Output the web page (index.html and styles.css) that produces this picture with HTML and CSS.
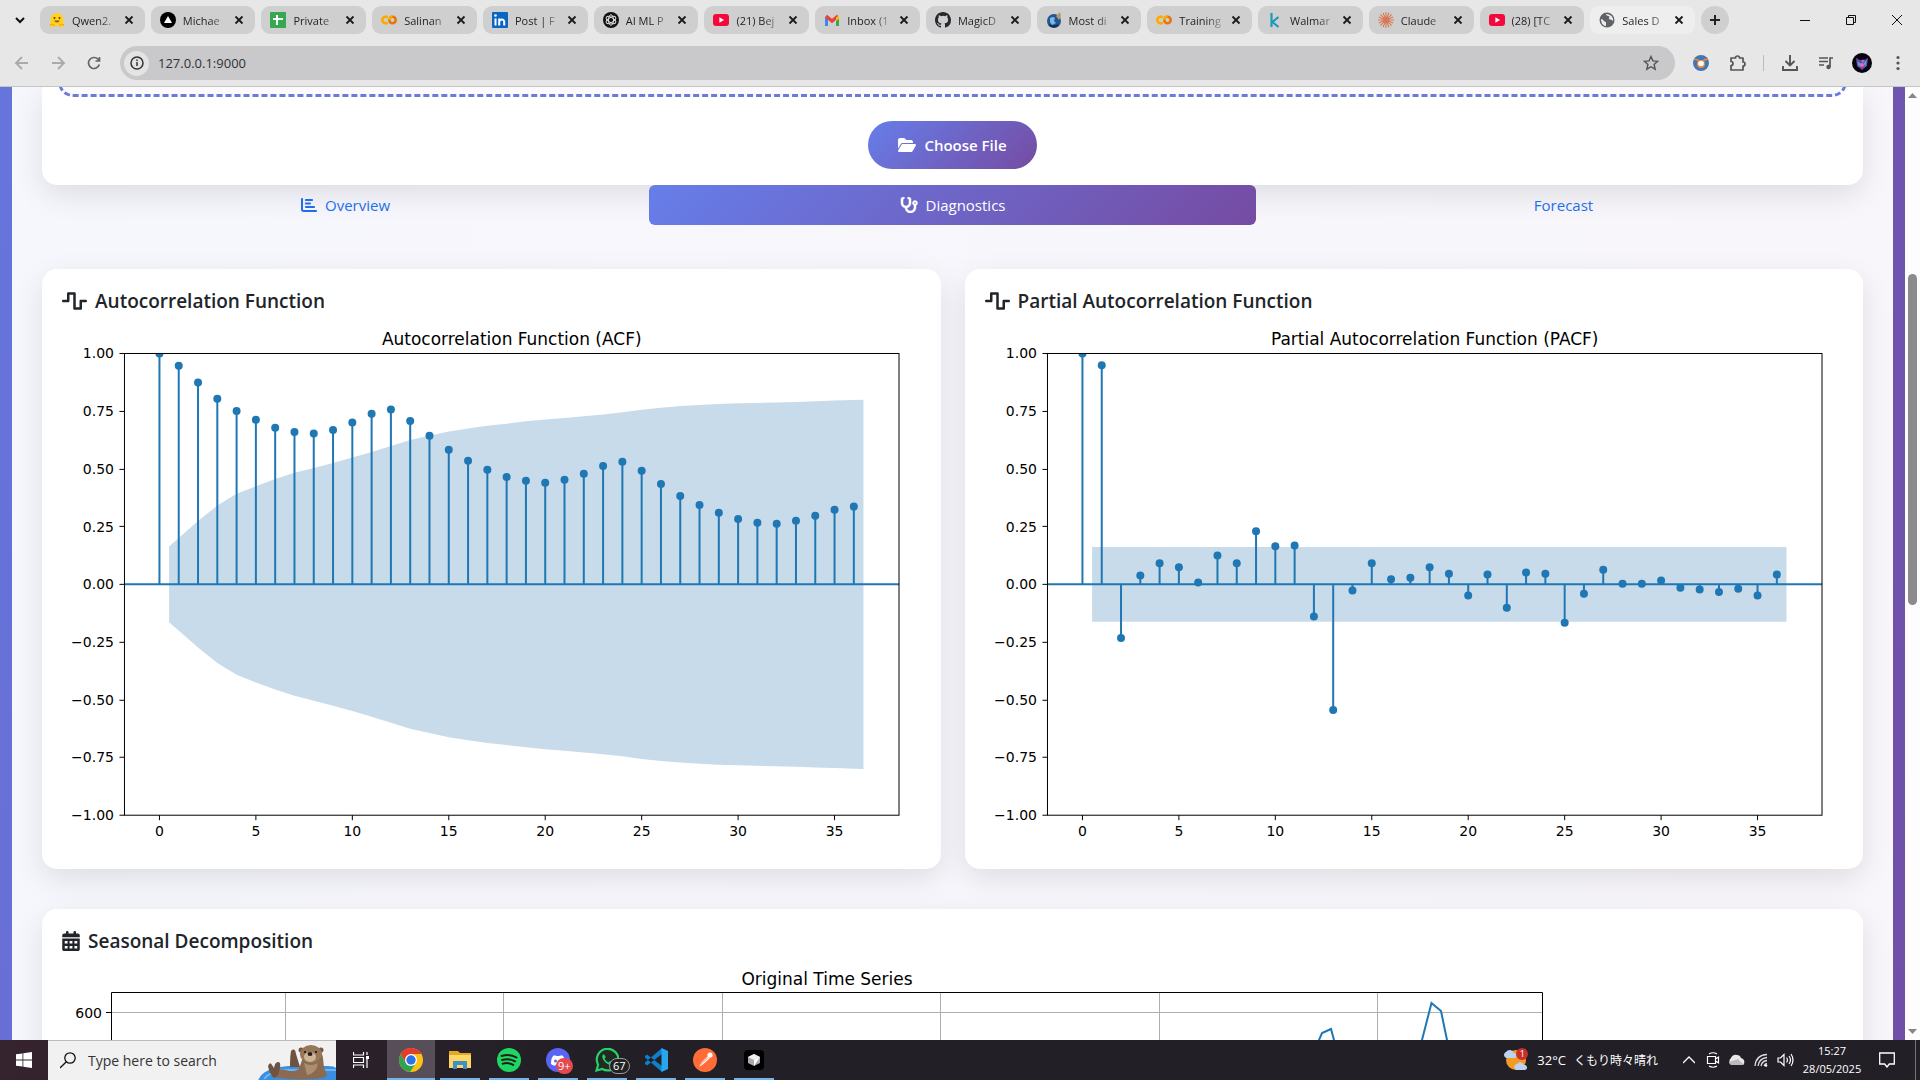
FILE: index.html
```html
<!DOCTYPE html>
<html lang="en">
<head>
<meta charset="utf-8">
<title>Sales Dashboard</title>
<link rel="stylesheet" href="styles.css">
</head>
<body>
<svg class="defs" aria-hidden="true">
  <symbol id="close" viewBox="0 0 10 10"><path d="M1.5 1.5l7 7M8.5 1.5l-7 7" stroke="#1b1b1b" stroke-width="1.8"/></symbol>
  <symbol id="youtube" viewBox="0 0 16 16"><rect y="2" width="16" height="12" rx="3" fill="#f5083c"/><path d="M6.4 5.3v5.4L11 8z" fill="#fff"/></symbol>
  <symbol id="colab" viewBox="0 0 16 16"><g fill="none" stroke-width="2.6"><circle cx="11.5" cy="8" r="3.2" stroke="#e8750a"/><path d="M6.700 5.400a3.300 3.300 0 1 0 0 5.200" stroke="#f9ab00"/><path d="M8.3 8a3.2 3.2 0 0 1 3.2-3.2" stroke="#f9ab00"/></g></symbol>
  <symbol id="wave" viewBox="0 0 640 512"><path d="M128 64c0-17.700 14.300-32 32-32H320c17.700 0 32 14.300 32 32V416h96V256c0-17.700 14.300-32 32-32H608c17.700 0 32 14.300 32 32s-14.300 32-32 32H512V448c0 17.700-14.300 32-32 32H320c-17.700 0-32-14.300-32-32V96H192V256c0 17.700-14.300 32-32 32H32c-17.700 0-32-14.300-32-32s14.300-32 32-32h96V64z" fill="currentColor"/></symbol>
</svg>

<header class="browser">
  <div class="tabstrip">
    <button class="tab-search" aria-label="Search tabs"><svg width="12" height="12" viewBox="0 0 12 12"><path d="M2 4l4 4 4-4" fill="none" stroke="#111" stroke-width="2"/></svg></button>
    <nav class="tabs" aria-label="Open tabs">
      <div class="tab"><svg class="fav" viewBox="0 0 16 16"><path d="M1 14c-1-1 0-3 1-3C0 5 4 1 8 1s8 4 6 10c1 0 2 2 1 3-2 2-4 1-5 0H6c-1 1-3 2-5 0z" fill="#ffd21e"/><circle cx="5.500" cy="6" r="1" fill="#553b16"/><circle cx="10.500" cy="6" r="1" fill="#553b16"/><path d="M5 8.500q3 4 6 0z" fill="#a8451d"/><path d="M1 13q3-2 5 1M15 13q-3-2-5 1" fill="none" stroke="#f59b12"/></svg><a href="#">Qwen2.</a><button aria-label="Close tab"><svg><use href="#close"/></svg></button></div>
      <div class="tab"><svg class="fav" viewBox="0 0 16 16"><circle cx="8" cy="8" r="8" fill="#000"/><path d="M8 4l4 7H4z" fill="#fff"/></svg><a href="#">Michae</a><button aria-label="Close tab"><svg><use href="#close"/></svg></button></div>
      <div class="tab"><svg class="fav" viewBox="0 0 16 16"><rect width="16" height="16" rx="1" fill="#36a852"/><path d="M7 3v10M3 7h10" stroke="#fff" stroke-width="2"/></svg><a href="#">Private</a><button aria-label="Close tab"><svg><use href="#close"/></svg></button></div>
      <div class="tab"><svg class="fav"><use href="#colab"/></svg><a href="#">Salinan</a><button aria-label="Close tab"><svg><use href="#close"/></svg></button></div>
      <div class="tab"><svg class="fav" viewBox="0 0 16 16"><rect width="16" height="16" rx="1" fill="#0a66c2"/><path d="M3.500 6.500v7M7.200 6.500v7M7.200 10c0-3 5-3.600 5 0v3.500" stroke="#fff" stroke-width="2" fill="none"/><circle cx="3.500" cy="3.500" r="1.300" fill="#fff"/></svg><a href="#">Post | F</a><button aria-label="Close tab"><svg><use href="#close"/></svg></button></div>
      <div class="tab"><svg class="fav" viewBox="0 0 16 16"><circle cx="8" cy="8" r="8" fill="#111"/><g fill="none" stroke="#ddd"><ellipse cx="8" cy="8" rx="2.500" ry="5.300"/><ellipse cx="8" cy="8" rx="2.500" ry="5.300" transform="rotate(60 8 8)"/><ellipse cx="8" cy="8" rx="2.500" ry="5.300" transform="rotate(120 8 8)"/></g></svg><a href="#">AI ML P</a><button aria-label="Close tab"><svg><use href="#close"/></svg></button></div>
      <div class="tab"><svg class="fav"><use href="#youtube"/></svg><a href="#">(21) Bej</a><button aria-label="Close tab"><svg><use href="#close"/></svg></button></div>
      <div class="tab"><svg class="fav" viewBox="0 0 16 16"><path d="M2.500 14V5" stroke="#4285f4" stroke-width="3"/><path d="M13.500 14V5" stroke="#34a853" stroke-width="3"/><path d="M2 4l6 5 6-5" fill="none" stroke="#ea4335" stroke-width="3.400"/><path d="M12 5.700L15 3v4l-3 2z" fill="#fbbc04"/></svg><a href="#">Inbox (1</a><button aria-label="Close tab"><svg><use href="#close"/></svg></button></div>
      <div class="tab"><svg class="fav" viewBox="0 0 16 16"><path fill="#24292f" d="M8 0C3.580 0 0 3.580 0 8c0 3.540 2.290 6.530 5.470 7.590.4.070.55-.17.55-.38 0-.19-.01-.82-.01-1.490-2.010.37-2.530-.49-2.690-.94-.09-.23-.48-.94-.82-1.130-.28-.15-.68-.52-.01-.53.63-.01 1.080.58 1.230.82.72 1.210 1.870.87 2.330.66.07-.52.28-.87.51-1.070-1.780-.2-3.640-.89-3.640-3.950 0-.87.31-1.590.82-2.150-.08-.2-.36-1.020.08-2.120 0 0 .67-.21 2.200.82a7.600 7.600 0 0 1 4 0c1.530-1.040 2.200-.82 2.200-.82.44 1.100.16 1.920.08 2.120.51.56.82 1.270.82 2.150 0 3.070-1.870 3.750-3.650 3.950.29.25.54.73.54 1.480 0 1.070-.01 1.930-.01 2.200 0 .21.15.46.55.38A8 8 0 0 0 16 8c0-4.420-3.580-8-8-8z"/></svg><a href="#">MagicD</a><button aria-label="Close tab"><svg><use href="#close"/></svg></button></div>
      <div class="tab"><svg class="fav" viewBox="0 0 16 16"><circle cx="8" cy="9" r="7" fill="#27548e"/><path d="M4 6q3-2 5 0l-1 3 2 2-4 2-2-3z" fill="#74b9e8"/><path d="M10 4l4-4 1 4-2 4z" fill="#b29b72"/><path d="M3 13q5 3 9 0" stroke="#13294a" stroke-width="2" fill="none"/></svg><a href="#">Most di</a><button aria-label="Close tab"><svg><use href="#close"/></svg></button></div>
      <div class="tab"><svg class="fav"><use href="#colab"/></svg><a href="#">Training</a><button aria-label="Close tab"><svg><use href="#close"/></svg></button></div>
      <div class="tab"><svg class="fav" viewBox="0 0 16 16"><path d="M4.500 1v14M11.500 5l-6 5 6 5" fill="none" stroke="#1a9cb8" stroke-width="2.200"/></svg><a href="#">Walmar</a><button aria-label="Close tab"><svg><use href="#close"/></svg></button></div>
      <div class="tab"><svg class="fav" viewBox="0 0 16 16"><path d="M8 0v16M0 8h16M2.300 2.300l11.400 11.400M13.700 2.300L2.300 13.700M5 .8l6 14.400M11 .8L5 15.200M.8 5l14.400 6M15.200 5L.8 11" stroke="#d97757" stroke-width="1.100"/></svg><a href="#">Claude</a><button aria-label="Close tab"><svg><use href="#close"/></svg></button></div>
      <div class="tab"><svg class="fav"><use href="#youtube"/></svg><a href="#">(28) [TC</a><button aria-label="Close tab"><svg><use href="#close"/></svg></button></div>
      <div class="tab active"><svg class="fav" viewBox="0 0 16 16"><circle cx="8" cy="8" r="7.500" fill="#5f6368"/><path d="M2 7c3 0 2 3 5 3v4c-3 0-5-3-5-7zM7 2c0 3 5 1 3 4-1 2 3 1 4 3 1-4-3-7-7-7z" fill="#ececec"/></svg><a href="#">Sales D</a><button aria-label="Close tab"><svg><use href="#close"/></svg></button></div>
    </nav>
    <button class="new-tab" aria-label="New tab"><svg width="12" height="12" viewBox="0 0 12 12"><path d="M6 1v10M1 6h10" stroke="#222" stroke-width="2"/></svg></button>
    <div class="window-controls">
      <button aria-label="Minimize"><svg width="12" height="12" viewBox="0 0 12 12"><path d="M1 6.500h10" stroke="#111"/></svg></button>
      <button aria-label="Restore"><svg width="12" height="12" viewBox="0 0 12 12"><path d="M1.500 3.500h7v7h-7zM3.500 3.500v-2h7v7h-2" fill="none" stroke="#111"/></svg></button>
      <button aria-label="Close"><svg width="12" height="12" viewBox="0 0 12 12"><path d="M1 1l10 10M11 1L1 11" stroke="#111"/></svg></button>
    </div>
  </div>
  <div class="toolbar">
    <div class="tools nav-tools">
      <button aria-label="Back"><svg width="16" height="16" viewBox="0 0 16 16"><path d="M14 8H2M8 2L2 8l6 6" fill="none" stroke="#aaa" stroke-width="1.800"/></svg></button>
      <button aria-label="Forward"><svg width="16" height="16" viewBox="0 0 16 16"><path d="M2 8h12M8 2l6 6-6 6" fill="none" stroke="#aaa" stroke-width="1.800"/></svg></button>
      <button aria-label="Reload"><svg width="16" height="16" viewBox="0 0 16 16"><path d="M13.300 9.500A5.500 5.500 0 1 1 12 4.200L13.500 5.700M13.500 2v4H9.500" fill="none" stroke="#666" stroke-width="1.700"/></svg></button>
    </div>
    <div class="omnibox">
      <button class="site-info" aria-label="Site information"><svg width="14" height="14" viewBox="0 0 14 14"><circle cx="7" cy="7" r="6" fill="none" stroke="#333" stroke-width="1.500"/><path d="M7 6v4M7 3.500V5" stroke="#333" stroke-width="1.500"/></svg></button>
      <input type="text" aria-label="Address" value="127.0.0.1:9000">
      <button class="star" aria-label="Bookmark"><svg width="16" height="16" viewBox="0 0 16 16"><path d="M8 1.500l1.900 4.400 4.800.4-3.600 3.200 1.100 4.700L8 11.700l-4.200 2.500 1.100-4.700L1.300 6.300l4.800-.4z" fill="none" stroke="#555" stroke-width="1.400"/></svg></button>
    </div>
    <div class="tools">
      <button aria-label="Extension"><svg width="16" height="16" viewBox="0 0 16 16"><circle cx="8" cy="8" r="8" fill="#4277b5"/><circle cx="8" cy="9" r="4" fill="#f0883a"/><path d="M1 4l4 1 1 3M15 4l-4 1-1 3" fill="none" stroke="#f0883a" stroke-width="1.500"/><circle cx="8" cy="8.500" r="2.800" fill="#fff"/></svg></button>
      <button aria-label="Extensions"><svg width="18" height="18" viewBox="0 0 18 18"><path d="M3 4h4.500a2 2 0 0 1 4 0H15v4a2 2 0 0 1 0 4v4H3v-4.500a2 2 0 0 0 0-4z" fill="none" stroke="#555" stroke-width="1.700" stroke-linejoin="round"/></svg></button>
      <span class="divider"></span>
      <button aria-label="Downloads"><svg width="18" height="18" viewBox="0 0 18 18"><path d="M9 1v10M4.500 7L9 11.500 13.500 7M2 12v4h14v-4" fill="none" stroke="#555" stroke-width="1.900"/></svg></button>
      <button aria-label="Media controls"><svg width="18" height="18" viewBox="0 0 18 18"><path d="M2 4h9M2 7.500h9M2 11h5M13 13V4h3" fill="none" stroke="#555" stroke-width="1.700"/><circle cx="11.500" cy="13" r="2.200" fill="#555"/></svg></button>
      <button aria-label="Profile"><svg width="20" height="20" viewBox="0 0 20 20"><circle cx="10" cy="10" r="10" fill="#08040f"/><path d="M4 5l4 2 4 0 4-2-1 8-5 4-5-4z" fill="#6d45a8"/><path d="M5 8l4 3-2 3zM15 7l-3 3 1 4z" fill="#48b6d8"/><circle cx="10" cy="12" r="2" fill="#e26fb0"/><circle cx="11" cy="8" r="1.500" fill="#a06ad8"/></svg></button>
      <button aria-label="Menu"><svg width="16" height="16" viewBox="0 0 16 16" fill="#555"><circle cx="8" cy="2.500" r="1.600"/><circle cx="8" cy="8" r="1.600"/><circle cx="8" cy="13.500" r="1.600"/></svg></button>
    </div>
  </div>
</header>

<div class="viewport">
  <main class="page">
    <div class="container">
      <section class="card upload">
        <div class="drop-zone"></div>
        <button class="choose"><svg width="18" height="16" viewBox="0 0 576 512"><path fill="currentColor" d="M88.700 223.800L0 375.800V96C0 60.700 28.700 32 64 32H181.500c17 0 33.300 6.700 45.300 18.700l26.500 26.500c12 12 28.300 18.700 45.300 18.700H416c35.300 0 64 28.700 64 64v32H144c-22.800 0-43.800 12.100-55.300 31.800zm27.600 16.100C122.100 230 132.600 224 144 224H544c11.500 0 22 6.100 27.700 16.100s5.700 22.200-.1 32.100l-112 192C453.900 474 443.400 480 432 480H32c-11.500 0-22-6.100-27.700-16.100s-5.700-22.200.1-32.100l112-192z"/></svg>Choose File</button>
      </section>
      <nav class="pills">
        <a href="#overview"><svg width="16" height="16" viewBox="0 0 512 512"><path fill="currentColor" d="M32 32c17.700 0 32 14.300 32 32V400c0 8.800 7.200 16 16 16H480c17.700 0 32 14.300 32 32s-14.300 32-32 32H80c-44.200 0-80-35.800-80-80V64C0 46.300 14.300 32 32 32zm96 64c0-17.700 14.300-32 32-32l192 0c17.700 0 32 14.300 32 32s-14.300 32-32 32l-192 0c-17.700 0-32-14.300-32-32zm32 80H288c17.700 0 32 14.300 32 32s-14.300 32-32 32H160c-17.700 0-32-14.300-32-32s14.300-32 32-32zm0 112H416c17.700 0 32 14.300 32 32s-14.300 32-32 32H160c-17.700 0-32-14.300-32-32s14.300-32 32-32z"/></svg>Overview</a>
        <a href="#diagnostics" class="current"><svg width="18" height="16" viewBox="0 0 576 512"><path fill="currentColor" stroke="currentColor" stroke-width="16" d="M142.400 21.900c5.600 16.800-3.500 34.900-20.200 40.500L96 71.100V192c0 53 43 96 96 96s96-43 96-96V71.100l-26.100-8.700c-16.800-5.600-25.800-23.700-20.200-40.500s23.700-25.800 40.500-20.200l26.100 8.700C334.400 19.100 352 43.500 352 71.100V192c0 77.200-54.600 141.600-127.300 156.700C231 404.600 278.400 448 336 448c61.900 0 112-50.100 112-112V265.300c-28.300-12.300-48-40.500-48-73.300c0-44.200 35.800-80 80-80s80 35.800 80 80c0 32.800-19.700 61-48 73.300V336c0 97.200-78.800 176-176 176c-92.900 0-168.900-71.900-175.500-163.100C87.200 334.200 32 269.600 32 192V71.100c0-27.500 17.600-52 43.800-60.700l26.100-8.700c16.800-5.600 34.900 3.500 40.500 20.200zM480 224a32 32 0 1 0 0-64 32 32 0 1 0 0 64z"/></svg>Diagnostics</a>
        <a href="#forecast"><span class="no-icon"></span>Forecast</a>
      </nav>
      <div class="grid">
        <section class="card">
          <h2><svg width="25" height="20"><use href="#wave"/></svg>Autocorrelation Function</h2>
          <svg class="chart" id="acf" viewBox="0 0 859 528" role="img" aria-label="Autocorrelation plot"></svg>
        </section>
        <section class="card">
          <h2><svg width="25" height="20"><use href="#wave"/></svg>Partial Autocorrelation Function</h2>
          <svg class="chart" id="pacf" viewBox="0 0 859 528" role="img" aria-label="Partial autocorrelation plot"></svg>
        </section>
      </div>
      <section class="card seasonal">
        <h2><svg width="18" height="20" viewBox="0 0 448 512"><path fill="currentColor" fill-rule="evenodd" d="M128 0c17.700 0 32 14.300 32 32V64H288V32c0-17.700 14.300-32 32-32s32 14.300 32 32V64h48c26.500 0 48 21.500 48 48v48H0V112C0 85.500 21.500 64 48 64H96V32c0-17.700 14.300-32 32-32zM0 192H448V464c0 26.500-21.500 48-48 48H48c-26.500 0-48-21.500-48-48zM64 256v64h72v-64zM188 256v64h72v-64zM312 256v64h72v-64zM64 384v64h72v-64zM188 384v64h72v-64zM312 384v64h72v-64z"/></svg>Seasonal Decomposition</h2>
        <svg class="series" width="1500" height="200" viewBox="0 0 1500 200" role="img" aria-label="Original time series">
          <text class="title" x="765" y="24">Original Time Series</text>
          <path class="gridline" d="M223.500 31v169M441.500 31v169M660.500 31v169M878.500 31v169M1097.500 31v169M1315.500 31v169M50 51.500h1430"/>
          <path class="line" d="M1244 145L1257 79l3-7 9-4 3 11 20 90 68-90 9.500-37 9.500 8 6 29 20 90"/>
          <path class="axis" d="M49.500 200V31.500h1431V200M44 51.500h5"/>
          <text class="tick" x="40" y="57">600</text>
        </svg>
      </section>
    </div>
  </main>
  <div class="scrollbar" aria-hidden="true">
    <svg width="15" height="17" viewBox="0 0 15 17"><path d="M7.500 6L12 11H3z" fill="#868686"/></svg>
    <div class="before"></div><div class="thumb"></div><div class="after"></div>
    <svg width="15" height="17" viewBox="0 0 15 17"><path d="M7.500 11L12 6H3z" fill="#868686"/></svg>
  </div>
</div>

<footer class="taskbar">
  <button class="start" aria-label="Start"><svg width="16" height="16" viewBox="0 0 16 16"><path d="M0 2.300L6.500 1.400v6.200H0zM7.300 1.300L16 0v7.600H7.300zM0 8.400h6.500v6.200L0 13.700zM7.300 8.400H16V16l-8.700-1.200z" fill="#fff"/></svg></button>
  <div class="search">
    <svg width="16" height="17" viewBox="0 0 16 17"><circle cx="10" cy="6" r="5.200" fill="none" stroke="#111" stroke-width="1.300"/><path d="M6.300 9.800L0 16" stroke="#111" stroke-width="1.300"/></svg>
    <input type="text" aria-label="Search" placeholder="Type here to search">
    <svg width="78" height="40" viewBox="0 0 78 40"><path d="M0 40Q4 27 30 25h40q6 0 8 2v13z" fill="#3a8fe0"/><path d="M6 38q6-8 22-9h50" fill="none" stroke="#6bb6f2" stroke-width="2"/><path d="M14 36q-2-6 4-8l10 1q6 3 13-1l3-9q0-8 8-10 12-1 13 8l1 10q4 6 2 9-20 5-54 0z" fill="#8a6a50"/><path d="M32 26q0-10 1-16 4-4 5 3l4 13zM10 25q2-5 4-1l2 3q1-7 5-6 3 2-1 13l-4 3q-5-5-6-12z" fill="#6f5340"/><circle cx="43" cy="9" r="2.500" fill="#77583f"/><circle cx="63" cy="9" r="2.500" fill="#77583f"/><ellipse cx="53" cy="13" rx="11" ry="9" fill="#967758"/><ellipse cx="52" cy="16" rx="6" ry="5" fill="#cdb598"/><ellipse cx="52" cy="13" rx="2.500" ry="2" fill="#2a1d17"/><circle cx="47" cy="11" r="1.100" fill="#111"/><circle cx="58" cy="11" r="1.100" fill="#111"/><path d="M46 22q7 4 14 0-1 10-11 12z" fill="#ab8e6e"/></svg>
  </div>
  <button class="task-view" aria-label="Task view"><svg width="16" height="16" viewBox="0 0 16 16"><path d="M.5 0v3h10V0M.5 16v-3h10v3M.5 5.500h10v5H.5zM14 0v3M14 6v10" fill="none" stroke="#fff" stroke-width="1.200"/><rect x="13" y="4" width="3" height="3" fill="#fff"/></svg></button>
  <div class="apps">
    <button class="on" aria-label="Chrome"><svg viewBox="0 0 24 24"><circle cx="12" cy="12" r="12" fill="#fbc116"/><path d="M1.600 6A12 12 0 0 1 22.400 6H12l-5.200 9z" fill="#e33b2e"/><path d="M1.600 6A12 12 0 0 0 11 24l6-9-10.200 0z" fill="#30a350"/><circle cx="12" cy="12" r="6" fill="#fff"/><circle cx="12" cy="12" r="4.700" fill="#2b73e8"/></svg></button>
    <button aria-label="File Explorer"><svg viewBox="0 0 24 24"><path d="M1 3h9l2 2h11v4H1z" fill="#e3a925"/><path d="M1 7h22v13H1z" fill="#fcd765"/><path d="M5 21v-8h14v8h-4v-4H9v4z" fill="#3f8fc9"/></svg></button>
    <button aria-label="Spotify"><svg viewBox="0 0 24 24"><circle cx="12" cy="12" r="12" fill="#1fd660"/><path d="M4.500 8q8-2.500 15 1.500M5 12q7-2 13 1.300M5.700 15.700q6-1.600 10.500 1.200" fill="none" stroke="#1c211f" stroke-width="2" stroke-linecap="round"/></svg></button>
    <button aria-label="Discord"><svg viewBox="0 0 24 24"><circle cx="12" cy="12" r="12" fill="#5865f2"/><path d="M5 16Q5 9 8 7.300l3 .7h2l3-.7Q19 9 19 16q-2 1.700-4 1.700l-1-1.200h-4l-1 1.200q-2 0-4-1.700z" fill="#fff"/><circle cx="9.500" cy="13" r="1.500" fill="#5865f2"/><circle cx="14.500" cy="13" r="1.500" fill="#5865f2"/></svg><span class="badge red">9+</span></button>
    <button aria-label="WhatsApp"><svg viewBox="0 0 24 24"><path d="M1.500 22.500l1.600-5.800A10.800 10.800 0 1 1 7.300 21z" fill="#1f2b25" stroke="#25d366" stroke-width="2.200"/><path d="M8 6.500c-3 3 4 12 9 10l1-2-3-1.600-1.500 1.600q-3-1-4-4l1.200-1.200L9.300 6.500z" fill="#25d366"/></svg><span class="badge dark">67</span></button>
    <button aria-label="VS Code"><svg viewBox="0 0 24 24"><path d="M1 8l2-1.500L18 18v6L1 9.500zM1 16l2 1.500L18 6V0L1 14.500z" fill="#0d7fcb"/><path d="M17.500 0L24 3v18l-6.500 3z" fill="#28a7ef"/></svg></button>
    <button aria-label="Postman"><svg viewBox="0 0 24 24"><circle cx="12" cy="12" r="12" fill="#ff6c37"/><path d="M6 19l2.500-4.500 6-6L17 10l-6.500 6z" fill="#fff"/><circle cx="17" cy="7" r="2.600" fill="#fff"/><path d="M8 16.500l7-7" stroke="#ff6c37" stroke-width=".8"/></svg></button>
    <button aria-label="Cursor"><svg viewBox="0 0 24 24"><rect x="2" y="2" width="20" height="20" rx="4" fill="#000"/><path d="M12 6l6 3v6l-6 3-6-3V9z" fill="#aaa"/><path d="M6 9l6-3 6 3-6 3z" fill="#eee"/><path d="M18 9l-6 3v6z" fill="#fff"/></svg></button>
  </div>
  <div class="tray">
    <button class="weather"><svg width="26" height="24" viewBox="0 0 26 24"><circle cx="13" cy="12" r="10" fill="#f59a23"/><path d="M2 9a3 3 0 0 1 1-5 4.500 4.500 0 0 1 8 1 2.500 2.500 0 0 1 0 5H3zM12 21a3 3 0 0 1 2-5 4 4 0 0 1 7 1 2.500 2.500 0 0 1 1 5h-9z" fill="#bcd3f3"/></svg><span class="alert">1</span><span>32°C</span><span lang="ja">くもり時々晴れ</span></button>
    <button aria-label="Show hidden icons"><svg width="12" height="12" viewBox="0 0 12 12"><path d="M0 9l6-6 6 6" fill="none" stroke="#fff" stroke-width="1.300"/></svg></button>
    <button aria-label="Meet now"><svg width="14" height="16" viewBox="0 0 14 16"><path d="M1.500 4.500h8v7h-8zM9.500 7l3-2v6l-3-2M3 2q4-2.500 8 0M3 14q4 2.500 8 0" fill="none" stroke="#fff" stroke-width="1.200"/></svg></button>
    <button aria-label="OneDrive"><svg width="18" height="12" viewBox="0 0 18 12"><path d="M4 11a4 4 0 0 1-1-7q2-4 6-3 3 0 4 3a4 4 0 0 1 2 7z" fill="#e9e9e9"/><path d="M3 11q-2-1-2-3l9-3 6 6z" fill="#bbb"/></svg></button>
    <button aria-label="Network"><svg width="14" height="14" viewBox="0 0 14 14"><path d="M1 13Q2 2 13 1.500M4 13Q5 5.500 13 4.500M7 13q1-5 6-5.500M10 13q1-2.500 3-2.500" fill="none" stroke="#ddd" stroke-width="1.300"/><circle cx="12" cy="12.500" r="1.300" fill="#fff"/></svg></button>
    <button aria-label="Volume"><svg width="17" height="14" viewBox="0 0 17 14"><path d="M1 5h2.500L7 1.500v11L3.500 9H1zM9.500 4.500q2 2.500 0 5M12 3q3 4 0 8M14 1q4 6 0 12" fill="none" stroke="#fff" stroke-width="1.200"/></svg></button>
    <button class="clock"><span>15:27</span><span>28/05/2025</span></button>
    <button class="notify" aria-label="Notifications"><svg width="16" height="16" viewBox="0 0 16 16"><path d="M.7 1h14.600v11h-5l-2.300 3-2.300-3h-5z" fill="none" stroke="#fff" stroke-width="1.300"/></svg></button>
    <span class="peek"></span>
  </div>
</footer>
<script src="charts.js"></script>
</body>
</html>
```
FILE: styles.css
```css
* { box-sizing: border-box; }
body {
  margin: 0;
  height: 100vh;
  display: flex;
  flex-direction: column;
  overflow: hidden;
  font-family: "Open Sans", "Noto Sans CJK JP", sans-serif;
  color: #212529;
}
button { border: 0; padding: 0; background: none; font: inherit; color: inherit; display: flex; align-items: center; justify-content: center; }
input { border: 0; padding: 0; background: none; font: inherit; color: inherit; outline: 0; flex: 1; min-width: 0; }
a { text-decoration: none; color: inherit; }
.defs { display: none; }

/* Browser window */
.browser { flex: none; background: #e7e7e7; border-bottom: 1px solid #c4c6c2; }
.tabstrip { display: flex; align-items: center; height: 40px; }
.tab-search { width: 40px; height: 28px; }
.tabs { display: flex; gap: 6px; flex: 0 1 1655px; min-width: 0; }
.tab { flex: 1 1 0; min-width: 0; height: 28px; display: flex; align-items: center; gap: 7px; padding: 0 11px 0 9px; border-radius: 9px; background: #cfcfcf; font-size: 11px; color: #1f1f1f; }
.tab.active { background: #eee; }
.tab a { flex: 1; min-width: 0; white-space: nowrap; mask-image: linear-gradient(90deg, #000 60%, rgba(0, 0, 0, 0.15)); }
.tab button svg { width: 10px; height: 10px; }
.fav { width: 16px; height: 16px; flex: none; }
.new-tab { width: 28px; height: 28px; margin-left: 6px; border-radius: 14px; background: #cfcfcf; }
.window-controls { display: flex; margin-left: auto; }
.window-controls button { width: 46px; height: 40px; }
.toolbar { display: flex; align-items: center; height: 46px; padding: 0 4px; }
.tools { display: flex; align-items: center; }
.tools button { width: 36px; height: 34px; }
.nav-tools { width: 116px; }
.omnibox { flex: 1; height: 34px; margin-right: 8px; padding: 0 16px 0 4px; display: flex; align-items: center; gap: 9px; border-radius: 17px; background: #c9c9cb; font-size: 13px; color: #303235; }
.site-info { width: 25px; height: 25px; border-radius: 13px; background: #e4e4e4; }
.divider { width: 1px; height: 16px; margin: 0 8px; background: #bbb; }

/* Web page */
.viewport { flex: 1; min-height: 0; display: flex; overflow: hidden; }
.page { flex: 1; min-width: 0; padding: 0 12px; background: linear-gradient(110deg, #6675dc, #704fa8); overflow: hidden; }
.container { padding: 0 30px; background: linear-gradient(90deg, #f6f7fd, #f8f6fb); }
.card { padding: 20px; border-radius: 15px; background: #fff; box-shadow: 0 10px 30px rgba(0, 0, 0, 0.1); }
.upload { padding: 0 16px 16px; border-radius: 0 0 15px 15px; overflow: hidden; }
.drop-zone { height: 80px; margin: -70px 0 24px; border: 3px dashed #6c7bd6; border-radius: 15px; background: #fbfbff; }
.choose { height: 48px; margin: 0 auto; padding: 0 30px; gap: 8px; border-radius: 25px; background: linear-gradient(135deg, #667eea, #764ba2); color: #fff; font-size: 15px; font-weight: 600; }
.pills { display: grid; grid-template-columns: repeat(3, 1fr); margin-bottom: 44px; font-size: 15px; color: #1f6fea; }
.pills a { height: 40px; display: flex; align-items: center; justify-content: center; gap: 8px; border-radius: 6px; }
.pills .current { background: linear-gradient(135deg, #667eea, #764ba2); color: #fff; }
.grid { display: grid; grid-template-columns: 1fr 1fr; gap: 24px; margin-bottom: 40px; }
h2 { display: flex; align-items: center; gap: 8px; height: 24px; margin: 0 0 8px; font-size: 19px; font-weight: 600; white-space: nowrap; }
.chart { display: block; width: 100%; }
.series { display: block; max-width: 100%; }
svg text { font-family: "DejaVu Sans", sans-serif; fill: #000; }
.title { font-size: 17px; text-anchor: middle; }
.tick { font-size: 14px; text-anchor: end; }
.tick.mid { text-anchor: middle; }
.axis { fill: none; stroke: #000; }
.gridline { fill: none; stroke: #b0b0b0; }
.line, .stem { fill: none; stroke: #1f77b4; stroke-width: 2; }
.dot { fill: #1f77b4; }
.band { fill: #c7dbeb; }

.scrollbar { flex: none; width: 15px; display: flex; flex-direction: column; align-items: center; background: #fdfdfd; }
.scrollbar svg { flex: none; }
.before { flex: 170; }
.thumb { flex: 331; width: 9px; border-radius: 5px; background: #8b8b8b; }
.after { flex: 418; }

/* Taskbar */
.taskbar { flex: none; height: 40px; display: flex; background: linear-gradient(90deg, #35232d, #231f27 30%, #231f27); color: #fff; font-size: 12px; }
.start { width: 48px; }
.search { width: 288px; display: flex; align-items: center; gap: 12px; padding-left: 12px; background: #f1f1f1; border-top: 1px solid #bbb; font-size: 14px; color: #333; }
.search input::placeholder { color: #333; opacity: 1; }
.task-view { width: 49px; margin-right: 2px; }
.apps { display: flex; gap: 1px; }
.apps button { position: relative; width: 48px; }
.apps svg { width: 24px; height: 24px; }
.apps button::after { content: ""; position: absolute; left: 4px; right: 4px; bottom: 0; height: 2px; background: #76b5ec; }
.apps .on { background: #584e59; }
.apps .on::after { left: 0; right: 0; }
.badge { position: absolute; top: 18px; left: 22px; height: 16px; padding: 0 2px; border-radius: 8px; font-size: 11px; line-height: 16px; }
.badge.red { background: #e5484d; }
.badge.dark { left: 26px; background: #222; border: 1px solid #999; line-height: 14px; padding: 0 3px; }
.tray { display: flex; margin-left: auto; }
.tray button { width: 24px; }
.tray .weather { position: relative; width: auto; gap: 8px; margin-right: 19px; font-size: 13px; white-space: nowrap; }
.weather [lang="ja"] { font-size: 12px; }
.alert { position: absolute; top: 8px; left: 13px; width: 12px; height: 12px; border-radius: 6px; background: #c9302c; font-size: 9px; line-height: 12px; }
.tray .clock { flex-direction: column; width: 70px; font-size: 11px; line-height: 18px; }
.tray .notify { width: 40px; margin-right: 8px; }
.peek { width: 5px; border-left: 1px solid #777; }
```
FILE: charts.js
```js
const acf = [1, .947, .874, .804, .751, .713, .678, .660, .653, .669, .701, .739, .757, .708, .644, .583, .535, .496, .465, .449, .440, .453, .479, .513, .531, .492, .435, .383, .344, .310, .283, .267, .262, .276, .297, .323, .337];
const pacf = [1, .949, -.232, .038, .091, .074, .008, .125, .091, .230, .165, .168, -.139, -.544, -.027, .091, .022, .029, .074, .046, -.048, .043, -.101, .051, .046, -.166, -.041, .063, .003, .003, .017, -.015, -.022, -.033, -.019, -.048, .043];
const acfBand = [.164, .274, .341, .392, .425, .456, .483, .504, .526, .549, .573, .599, .625, .644, .662, .675, .687, .696, .706, .714, .721, .728, .736, .745, .756, .765, .772, .777, .781, .784, .786, .788, .790, .793, .796, .800];

const box = { left: 62.5, right: 837.5, top: 32.5, bottom: 494.5 };
const x = lag => 97.5 + lag * 19.3;
const y = value => 263.5 - value * 231;

function draw(id, title, values, band) {
  const lag = i => (i === 0 ? 0.5 : i === band.length - 1 ? 36.5 : i + 1);
  const upper = band.map((b, i) => `${x(lag(i))},${y(b)}`);
  const lower = band.map((b, i) => `${x(lag(i))},${y(-b)}`).reverse();
  const parts = [
    `<clipPath id="${id}-clip"><rect x="${box.left}" y="${box.top}" width="${box.right - box.left}" height="${box.bottom - box.top}"/></clipPath>`,
    `<text class="title" x="450" y="24">${title}</text>`,
    `<polygon class="band" points="${upper.concat(lower).join(' ')}"/>`,
    `<g clip-path="url(#${id}-clip)">`,
    `<path class="stem" d="M${box.left} ${y(0)}H${box.right}"/>`
  ];
  values.forEach((v, i) => {
    parts.push(`<path class="stem" d="M${x(i)} ${y(0)}V${y(v)}"/><circle class="dot" cx="${x(i)}" cy="${y(v)}" r="4"/>`);
  });
  parts.push('</g>', `<rect class="axis" x="${box.left}" y="${box.top}" width="${box.right - box.left}" height="${box.bottom - box.top}"/>`);
  for (let v = 1; v >= -1; v -= 0.25) {
    const label = v.toFixed(2).replace('-', '−');
    parts.push(`<path class="axis" d="M${box.left - 5} ${Math.floor(y(v)) + 0.5}h5"/><text class="tick" x="52" y="${y(v) + 5}">${label}</text>`);
  }
  for (let n = 0; n <= 35; n += 5) {
    parts.push(`<path class="axis" d="M${x(n)} ${box.bottom}v5"/><text class="tick mid" x="${x(n)}" y="515">${n}</text>`);
  }
  document.getElementById(id).innerHTML = parts.join('');
}

draw('acf', 'Autocorrelation Function (ACF)', acf, acfBand);
draw('pacf', 'Partial Autocorrelation Function (PACF)', pacf, Array(36).fill(0.162));
```
